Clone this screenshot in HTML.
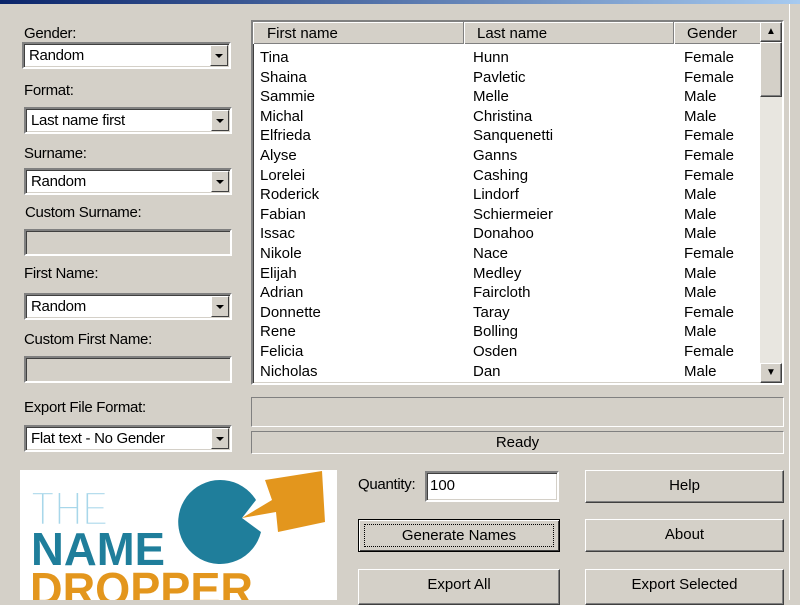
<!DOCTYPE html>
<html><head><style>
*{margin:0;padding:0;box-sizing:border-box}
body{width:800px;height:600px;overflow:hidden;background:#d4d0c8;font-family:"Liberation Sans",sans-serif;font-size:15px;color:#000;position:relative}
.a{position:absolute}
.title{left:0;top:0;width:800px;height:4px;background:linear-gradient(90deg,#0a246a,#a6caf0)}
.lbl{position:absolute;white-space:nowrap;letter-spacing:-0.3px}
.sunk{position:absolute;border:2px solid;border-color:#808080 #fff #fff #808080;box-shadow:inset 1px 1px 0 #404040,inset -1px -1px 0 #d4d0c8}
.combo{background:#fff}
.combo span{position:absolute;left:5px;top:3px;letter-spacing:-0.3px}
.dd{position:absolute;right:1px;top:1px;width:18px;bottom:1px;background:#d4d0c8;border:1px solid;border-color:#fff #404040 #404040 #fff}
.dd:after{content:"";position:absolute;left:4px;top:8px;border-left:4px solid transparent;border-right:4px solid transparent;border-top:4px solid #000}
.btn{position:absolute;background:#d4d0c8;border:1px solid;border-color:#fff #404040 #404040 #fff;box-shadow:inset -1px -1px 0 #808080;text-align:center;line-height:30px}
.row{position:absolute;left:0;height:20px;width:500px}
.row span{position:absolute}
</style></head><body>
<div class="a title"></div>
<div class="a" style="left:789px;top:4px;width:11px;height:596px;border-left:1px solid #fff;background:#d4d0c8"></div>

<div class="lbl" style="left:24px;top:25px">Gender:</div>
<div class="sunk combo" style="left:22px;top:42px;width:209px;height:27px"><span>Random</span><div class="dd"></div></div>
<div class="lbl" style="left:24px;top:82px">Format:</div>
<div class="sunk combo" style="left:24px;top:107px;width:208px;height:27px"><span>Last name first</span><div class="dd"></div></div>
<div class="lbl" style="left:24px;top:145px">Surname:</div>
<div class="sunk combo" style="left:24px;top:168px;width:208px;height:27px"><span>Random</span><div class="dd"></div></div>
<div class="lbl" style="left:25px;top:204px">Custom Surname:</div>
<div class="sunk" style="left:24px;top:229px;width:208px;height:27px"></div>
<div class="lbl" style="left:24px;top:265px">First Name:</div>
<div class="sunk combo" style="left:24px;top:293px;width:208px;height:27px"><span>Random</span><div class="dd"></div></div>
<div class="lbl" style="left:24px;top:331px">Custom First Name:</div>
<div class="sunk" style="left:24px;top:356px;width:208px;height:27px"></div>
<div class="lbl" style="left:24px;top:399px">Export File Format:</div>
<div class="sunk combo" style="left:24px;top:425px;width:208px;height:27px"><span>Flat text - No Gender</span><div class="dd"></div></div>

<div class="sunk" style="left:251px;top:20px;width:533px;height:365px;background:#fff;overflow:hidden">
 <div class="a" style="left:0;top:0;width:507px;height:22px;background:#d4d0c8;border-bottom:1px solid #808080">
  <div class="a" style="left:0;top:0;width:211px;height:22px;border-right:1px solid #808080;box-shadow:inset 1px 1px 0 #fff"><span class="a" style="left:14px;top:3px">First name</span></div>
  <div class="a" style="left:211px;top:0;width:210px;height:22px;border-right:1px solid #808080;box-shadow:inset 1px 1px 0 #fff"><span class="a" style="left:13px;top:3px">Last name</span></div>
  <div class="a" style="left:421px;top:0;width:86px;height:22px;box-shadow:inset 1px 1px 0 #fff"><span class="a" style="left:13px;top:3px">Gender</span></div>
 </div>
 <div class="a" style="left:507px;top:0;width:22px;height:361px;background:#e8e6e0">
  <div class="btn" style="left:0;top:0;width:22px;height:20px;line-height:18px;font-size:10px">▲</div>
  <div class="btn" style="left:0;top:20px;width:22px;height:55px"></div>
  <div class="btn" style="left:0;top:341px;width:22px;height:20px;line-height:18px;font-size:10px">▼</div>
 </div>
 <div class="a" style="left:7px;top:27px">
  <div class="row" style="top:0"><span>Tina</span><span style="left:213px">Hunn</span><span style="left:424px">Female</span></div>
  <div class="row" style="top:19.6px"><span>Shaina</span><span style="left:213px">Pavletic</span><span style="left:424px">Female</span></div>
  <div class="row" style="top:39.2px"><span>Sammie</span><span style="left:213px">Melle</span><span style="left:424px">Male</span></div>
  <div class="row" style="top:58.8px"><span>Michal</span><span style="left:213px">Christina</span><span style="left:424px">Male</span></div>
  <div class="row" style="top:78.4px"><span>Elfrieda</span><span style="left:213px">Sanquenetti</span><span style="left:424px">Female</span></div>
  <div class="row" style="top:98px"><span>Alyse</span><span style="left:213px">Ganns</span><span style="left:424px">Female</span></div>
  <div class="row" style="top:117.6px"><span>Lorelei</span><span style="left:213px">Cashing</span><span style="left:424px">Female</span></div>
  <div class="row" style="top:137.2px"><span>Roderick</span><span style="left:213px">Lindorf</span><span style="left:424px">Male</span></div>
  <div class="row" style="top:156.8px"><span>Fabian</span><span style="left:213px">Schiermeier</span><span style="left:424px">Male</span></div>
  <div class="row" style="top:176.4px"><span>Issac</span><span style="left:213px">Donahoo</span><span style="left:424px">Male</span></div>
  <div class="row" style="top:196px"><span>Nikole</span><span style="left:213px">Nace</span><span style="left:424px">Female</span></div>
  <div class="row" style="top:215.6px"><span>Elijah</span><span style="left:213px">Medley</span><span style="left:424px">Male</span></div>
  <div class="row" style="top:235.2px"><span>Adrian</span><span style="left:213px">Faircloth</span><span style="left:424px">Male</span></div>
  <div class="row" style="top:254.8px"><span>Donnette</span><span style="left:213px">Taray</span><span style="left:424px">Female</span></div>
  <div class="row" style="top:274.4px"><span>Rene</span><span style="left:213px">Bolling</span><span style="left:424px">Male</span></div>
  <div class="row" style="top:294px"><span>Felicia</span><span style="left:213px">Osden</span><span style="left:424px">Female</span></div>
  <div class="row" style="top:313.6px"><span>Nicholas</span><span style="left:213px">Dan</span><span style="left:424px">Male</span></div>
 </div>
</div>

<div class="a" style="left:251px;top:397px;width:533px;height:30px;border:1px solid;border-color:#808080 #fff #fff #808080"></div>
<div class="a" style="left:251px;top:431px;width:533px;height:23px;border:1px solid;border-color:#808080 #fff #fff #808080;text-align:center;line-height:21px">Ready</div>

<div class="a" style="left:20px;top:470px;width:317px;height:130px;background:#fff;overflow:hidden">
 <svg width="317" height="130" viewBox="0 0 317 130">
  <path d="M245,10 L302,1 L305,52 L258,62 L256,42 L222,48 L252,30 Z" fill="#e3961d"/>
  <path d="M241,62 A42,42 0 1 1 236,30 L222,48 Z" fill="#1f7e9b"/>
  <text x="11" y="55" font-family="Liberation Sans" font-size="48" fill="#a8d7ea" textLength="77" lengthAdjust="spacingAndGlyphs" stroke="#fff" stroke-width="2.5">THE</text>
  <text x="11" y="95" font-family="Liberation Sans" font-size="46" font-weight="bold" fill="#1f7e9b" textLength="134" lengthAdjust="spacingAndGlyphs">NAME</text>
  <text x="10" y="135" font-family="Liberation Sans" font-size="46" font-weight="bold" fill="#e3961d" textLength="223" lengthAdjust="spacingAndGlyphs">DROPPER</text>
 </svg>
</div>

<div class="lbl" style="left:358px;top:476px">Quantity:</div>
<div class="sunk" style="left:425px;top:471px;width:134px;height:31px;background:#fff"><span class="a" style="left:3px;top:4px">100</span></div>
<div class="btn" style="left:358px;top:519px;width:202px;height:33px;border:1px solid #000;box-shadow:inset 1px 1px 0 #fff,inset -1px -1px 0 #404040">
 <div class="a" style="left:5px;top:4px;right:5px;bottom:4px;border:1px dotted #000;line-height:22px">Generate Names</div></div>
<div class="btn" style="left:585px;top:470px;width:199px;height:33px">Help</div>
<div class="btn" style="left:585px;top:519px;width:199px;height:33px">About</div>
<div class="btn" style="left:358px;top:569px;width:202px;height:36px">Export All</div>
<div class="btn" style="left:585px;top:569px;width:199px;height:36px">Export Selected</div>
</body></html>
